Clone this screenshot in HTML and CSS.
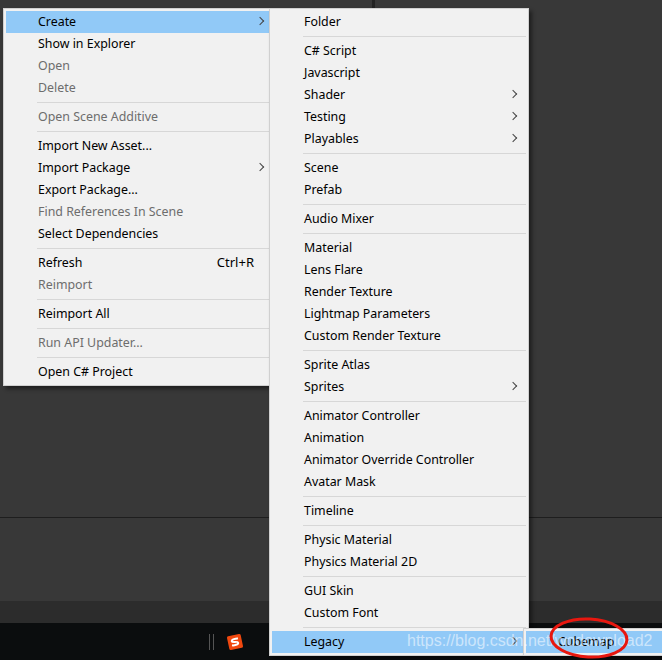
FILE: index.html
```html
<!DOCTYPE html>
<html>

<head>
    <title>Context Menu</title>
    <link rel="stylesheet" href="styles.css">
</head>

<body>
    <div class="editor">
        <div class="panel">
            <div class="panel-top"><div class="splitter"></div></div>
            <div class="panel-low"></div>
        </div>
        <div class="statusbar"></div>
        <div class="taskbar">
            <div class="grip"></div>
            <svg class="ime" width="18" height="18" viewBox="0 0 18 18">
                <rect x="2" y="2" width="14" height="14" rx="1.5" fill="#f0480f" transform="rotate(-12 9 9)"/>
                <path d="M12.6 6.2 C10.5 5.6 6.2 5.6 6 7.6 C5.9 9.4 11.8 8.4 11.9 10.3 C12 12.2 7.4 12.4 5.4 11.6" fill="none" stroke="#fff" stroke-width="2" transform="rotate(-12 9 9)"/>
            </svg>
        </div>
    </div>

    <div class="menu menu-main">
        <div class="item active"><span>Create</span><i class="arrow"></i></div>
        <div class="item"><span>Show in Explorer</span></div>
        <div class="item off"><span>Open</span></div>
        <div class="item off"><span>Delete</span></div>
        <div class="sep"></div>
        <div class="item off"><span>Open Scene Additive</span></div>
        <div class="sep"></div>
        <div class="item"><span>Import New Asset...</span></div>
        <div class="item"><span>Import Package</span><i class="arrow"></i></div>
        <div class="item"><span>Export Package...</span></div>
        <div class="item off"><span>Find References In Scene</span></div>
        <div class="item"><span>Select Dependencies</span></div>
        <div class="sep"></div>
        <div class="item"><span>Refresh</span><em class="key">Ctrl+R</em></div>
        <div class="item off"><span>Reimport</span></div>
        <div class="sep"></div>
        <div class="item"><span>Reimport All</span></div>
        <div class="sep"></div>
        <div class="item off"><span>Run API Updater...</span></div>
        <div class="sep"></div>
        <div class="item"><span>Open C# Project</span></div>
    </div>

    <div class="menu menu-create">
        <div class="item"><span>Folder</span></div>
        <div class="sep"></div>
        <div class="item"><span>C# Script</span></div>
        <div class="item"><span>Javascript</span></div>
        <div class="item"><span>Shader</span><i class="arrow"></i></div>
        <div class="item"><span>Testing</span><i class="arrow"></i></div>
        <div class="item"><span>Playables</span><i class="arrow"></i></div>
        <div class="sep"></div>
        <div class="item"><span>Scene</span></div>
        <div class="item"><span>Prefab</span></div>
        <div class="sep"></div>
        <div class="item"><span>Audio Mixer</span></div>
        <div class="sep"></div>
        <div class="item"><span>Material</span></div>
        <div class="item"><span>Lens Flare</span></div>
        <div class="item"><span>Render Texture</span></div>
        <div class="item"><span>Lightmap Parameters</span></div>
        <div class="item"><span>Custom Render Texture</span></div>
        <div class="sep"></div>
        <div class="item"><span>Sprite Atlas</span></div>
        <div class="item"><span>Sprites</span><i class="arrow"></i></div>
        <div class="sep"></div>
        <div class="item"><span>Animator Controller</span></div>
        <div class="item"><span>Animation</span></div>
        <div class="item"><span>Animator Override Controller</span></div>
        <div class="item"><span>Avatar Mask</span></div>
        <div class="sep"></div>
        <div class="item"><span>Timeline</span></div>
        <div class="sep"></div>
        <div class="item"><span>Physic Material</span></div>
        <div class="item"><span>Physics Material 2D</span></div>
        <div class="sep"></div>
        <div class="item"><span>GUI Skin</span></div>
        <div class="item"><span>Custom Font</span></div>
        <div class="sep"></div>
        <div class="item active"><span>Legacy</span><i class="arrow"></i></div>
    </div>

    <div class="menu menu-legacy">
        <div class="item active"><span>Cubemap</span></div>
    </div>

    <div class="watermark">https://blog.csdn.net/wodownload2</div>
    <svg class="circle" width="90" height="48" viewBox="0 0 90 48">
        <ellipse cx="45" cy="23" rx="38" ry="19" fill="none" stroke="#e8170f" stroke-width="3" transform="rotate(3 45 23)"/>
    </svg>
</body>

</html>
```

FILE: styles.css
```css
body {
    margin: 0;
    width: 662px;
    height: 660px;
    overflow: hidden;
    position: relative;
    background-color: #383838;
    font-family: 'Noto Sans', sans-serif;
    font-size: 12.4px;
    color: #000;
}

.editor {
    display: flex;
    flex-direction: column;
    height: 660px;
}

.panel {
    height: 601px;
    display: flex;
    flex-direction: column;
}

.panel-top {
    height: 517px;
    border-bottom: 1px solid #1e1e1e;
    display: flex;
}

.splitter {
    width: 3px;
    margin-left: 372px;
    background-color: #232323;
}

.panel-low {
    flex: 1;
    background-color: #383838;
}

.statusbar {
    height: 22px;
    background-color: #2c2c2c;
}

.taskbar {
    flex: 1;
    background-color: #0b0d0e;
    display: flex;
    align-items: center;
    padding-left: 209px;
}

.grip {
    width: 3px;
    height: 16px;
    border-left: 1px solid #555;
    border-right: 1px solid #555;
}

.ime {
    margin-left: 12px;
}

.menu {
    position: absolute;
    box-sizing: border-box;
    background-color: #f1f1f1;
    border: 1px solid #d0d0d0;
    padding: 2px;
    box-shadow: 3px 3px 4px rgba(0, 0, 0, 0.45);
}

.menu-main {
    left: 3px;
    top: 8px;
    width: 267px;
    padding-right: 0;
    border-right: 0;
}

.menu-main .arrow {
    margin-right: 7px;
}

.menu-create {
    left: 269px;
    top: 8px;
    width: 260px;
}

.menu-create .arrow {
    margin-right: 10px;
}

.menu-legacy {
    left: 523px;
    top: 628px;
    width: 160px;
    height: 28px;
}

.item {
    height: 22px;
    box-sizing: border-box;
    padding-bottom: 2px;
    display: flex;
    align-items: center;
    justify-content: space-between;
    padding-left: 32px;
}

.item.active {
    background-color: #91c9f7;
}

.item.off {
    color: #6d6d6d;
}

.key {
    font-style: normal;
    font-size: 13px;
    padding-right: 16px;
}

.arrow {
    width: 5px;
    height: 5px;
    border-top: 1px solid #444;
    border-right: 1px solid #444;
    transform: rotate(45deg);
}

.sep {
    height: 1px;
    margin: 3px 0 3px 31px;
    background-color: #d7d7d7;
}

.watermark {
    position: absolute;
    left: 407px;
    top: 632px;
    font-family: 'Liberation Sans', sans-serif;
    font-size: 16px;
    color: rgba(255, 255, 255, 0.55);
}

.circle {
    position: absolute;
    left: 544px;
    top: 615px;
}
```
